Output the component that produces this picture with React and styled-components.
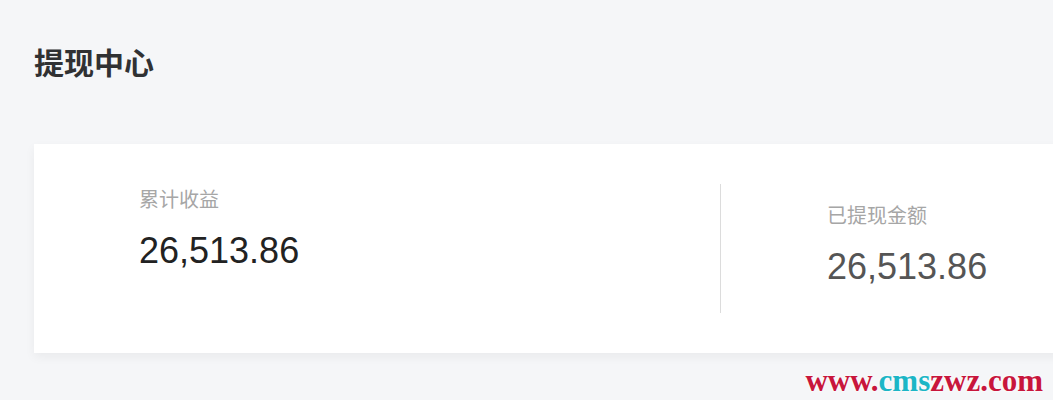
import React from "react";
import styled, { createGlobalStyle } from "styled-components";

const GlobalStyle = createGlobalStyle`
  html, body {
    margin: 0;
    padding: 0;
    background: #f5f6f8;
    overflow: hidden;
  }
  body {
    font-family: "Liberation Sans", Arial, "Noto Sans CJK SC", sans-serif;
  }
`;

const Page = styled.div`
  position: relative;
  width: 1053px;
  height: 400px;
  padding: 40px 0 0 34px;
  box-sizing: border-box;
  overflow: hidden;
`;

const Title = styled.h1`
  margin: 0;
  font-family: "Noto Sans CJK SC", sans-serif;
  font-size: 30px;
  line-height: 42px;
  font-weight: 700;
  color: #303133;
`;

const Card = styled.section`
  margin-top: 62px;
  width: 1374px;
  height: 209px;
  box-sizing: border-box;
  padding: 40px 0;
  background: #ffffff;
  box-shadow: 0 4px 10px rgba(0, 0, 0, 0.05);
  display: flex;
`;

const Stat = styled.div`
  flex: 1;
  box-sizing: border-box;
  padding-left: ${(p) => (p.$divided ? "106px" : "105px")};
  padding-top: ${(p) => p.$offset || 0}px;
  border-left: ${(p) => (p.$divided ? "1px solid #dcdcdc" : "none")};
`;

const Label = styled.div`
  font-family: "Noto Sans CJK SC", sans-serif;
  font-size: 20px;
  line-height: 30px;
  color: #a6a6a6;
`;

const Value = styled.div`
  margin-top: 17px;
  font-family: "Liberation Sans", Arial, sans-serif;
  font-size: 36px;
  line-height: 40px;
  color: ${(p) => p.$color};
`;

const Watermark = styled.div`
  position: absolute;
  right: 10px;
  bottom: 2px;
  font-family: "Liberation Serif", "Times New Roman", serif;
  font-weight: 700;
  font-size: 31px;
  line-height: 34px;
  text-shadow: 0 0 2px #fff, 0 0 3px #fff;
`;

const Part = styled.span`
  color: ${(p) => (p.$accent ? "#1cb6c6" : "#c8163c")};
`;

export default function App() {
  return (
    <>
      <GlobalStyle />
      <Page>
        <Title>提现中心</Title>
        <Card>
          <Stat>
            <Label>累计收益</Label>
            <Value $color="#222222">26,513.86</Value>
          </Stat>
          <Stat $divided $offset={16}>
            <Label>已提现金额</Label>
            <Value $color="#555555">26,513.86</Value>
          </Stat>
        </Card>
        <Watermark>
          <Part>www.</Part>
          <Part $accent>cms</Part>
          <Part>zwz.com</Part>
        </Watermark>
      </Page>
    </>
  );
}
